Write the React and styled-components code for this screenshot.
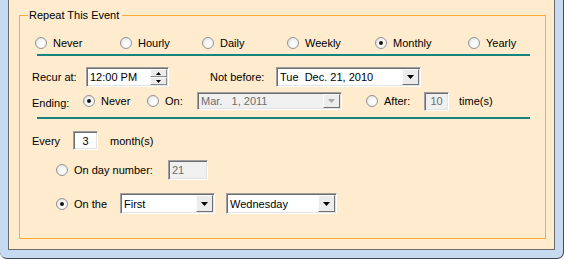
import styled, { createGlobalStyle, css } from "styled-components";

const GlobalStyle = createGlobalStyle`
  html, body {
    margin: 0;
    padding: 0;
    background: #ffffff;
  }
  body {
    font-family: "Liberation Sans", Arial, sans-serif;
    font-size: 11px;
    color: #000;
  }
`;

const Window = styled.div`
  box-sizing: border-box;
  width: 564px;
  height: 259px;
  display: flex;
  padding: 0 8px 8px 8px;
  background: #c6daf2;
  border-right: 1px solid #3e4856;
  border-bottom: 1px solid #3e4856;
  border-radius: 0 0 7px 7px;
`;

const Panel = styled.div`
  box-sizing: border-box;
  width: 547px;
  height: 250px;
  display: flex;
  padding: 9px 8px 10px 10px;
  background: #ffebcd;
  border: 1px solid #6b6b6b;
  border-top: none;
`;

const GroupBox = styled.fieldset`
  box-sizing: border-box;
  flex: 1;
  min-width: 0;
  margin: 0;
  padding: 0;
  border: 1px solid #fbab38;
`;

const Legend = styled.legend`
  margin-left: 8px;
  padding: 0 3px 0 1px;
  line-height: 13px;
  font-size: 11px;
`;

const Body = styled.div`
  display: flex;
  flex-direction: column;
`;

const Row = styled.div`
  display: flex;
  align-items: center;
  height: ${(p) => p.$h}px;
  margin-top: ${(p) => p.$top}px;
  padding-left: ${(p) => p.$left}px;
  white-space: nowrap;
`;

const Divider = styled.div`
  height: 2px;
  margin: ${(p) => p.$top}px 15px 0 17px;
  background: #16837e;
`;

const Label = styled.span`
  flex: none;
  width: ${(p) => (p.$w ? `${p.$w}px` : "auto")};
  margin-left: ${(p) => p.$ml || 0}px;
  position: relative;
  top: ${(p) => p.$dy || 0}px;
`;

const Option = styled.label`
  flex: none;
  display: flex;
  align-items: center;
  gap: 6px;
  width: ${(p) => (p.$w ? `${p.$w}px` : "auto")};
  margin-left: ${(p) => p.$ml || 0}px;
`;

const RadioDot = styled.span`
  box-sizing: border-box;
  position: relative;
  flex: none;
  width: 12px;
  height: 12px;
  border-radius: 50%;
  border: 1px solid #939393;
  background: radial-gradient(
    circle at 62% 62%,
    #ffffff 0%,
    #f6f6f6 45%,
    #d6d6d6 100%
  );

  &::after {
    content: "";
    display: ${(p) => (p.$on ? "block" : "none")};
    position: absolute;
    left: 3px;
    top: 3px;
    width: 4px;
    height: 4px;
    border-radius: 50%;
    background: #151515;
  }
`;

const sunken = css`
  box-sizing: border-box;
  border-style: solid;
  border-width: 1px;
  border-color: #a0a0a0 #ffffff #ffffff #a0a0a0;
  box-shadow: inset 1px 1px 0 #6e6e6e, inset -1px -1px 0 #e3e3e3;
`;

const TextBox = styled.div`
  ${sunken}
  flex: none;
  display: flex;
  align-items: center;
  justify-content: ${(p) => (p.$center ? "center" : "flex-start")};
  width: ${(p) => p.$w}px;
  height: ${(p) => p.$h}px;
  margin-left: ${(p) => p.$ml || 0}px;
  padding: 0 3px;
  background: ${(p) => (p.$disabled ? "#f0f0f0" : "#ffffff")};
  color: ${(p) => (p.$disabled ? "#6d6d6d" : "#000000")};
`;

const FieldText = styled.span`
  flex: 1;
  white-space: pre;
  overflow: hidden;
`;

const DropButton = styled.span`
  box-sizing: border-box;
  flex: none;
  display: flex;
  align-items: center;
  justify-content: center;
  width: 17px;
  height: ${(p) => p.$h}px;
  margin-right: -2px;
  background: #ececec;
  border: 1px solid;
  border-color: #fbfbfb #707070 #707070 #fbfbfb;
`;

const SpinColumn = styled.span`
  flex: none;
  display: flex;
  flex-direction: column;
  width: 17px;
  height: 16px;
  margin-right: -2px;
`;

const SpinButton = styled.span`
  box-sizing: border-box;
  flex: 1;
  display: flex;
  align-items: center;
  justify-content: center;
  background: #ececec;
  border: 1px solid;
  border-color: #fbfbfb #8a8a8a #8a8a8a #fbfbfb;
`;

function Arrow({ up, size = 7, color = "#000" }) {
  const h = Math.ceil(size / 2);
  return (
    <svg width={size} height={h} viewBox={`0 0 ${size} ${h}`}>
      <polygon
        points={up ? `0,${h} ${size / 2},0 ${size},${h}` : `0,0 ${size},0 ${size / 2},${h}`}
        fill={color}
      />
    </svg>
  );
}

function Radio({ on, w, ml, children }) {
  return (
    <Option $w={w} $ml={ml}>
      <RadioDot $on={on} />
      <span>{children}</span>
    </Option>
  );
}

function Combo({ w, h, ml, disabled, children }) {
  return (
    <TextBox $w={w} $h={h} $ml={ml} $disabled={disabled}>
      <FieldText>{children}</FieldText>
      <DropButton $h={h - 4}>
        <Arrow color={disabled ? "#a6a6a6" : "#000"} />
      </DropButton>
    </TextBox>
  );
}

const frequencies = [
  { label: "Never", w: 85 },
  { label: "Hourly", w: 82 },
  { label: "Daily", w: 85 },
  { label: "Weekly", w: 88 },
  { label: "Monthly", w: 93, on: true },
  { label: "Yearly" },
];

export default function App() {
  return (
    <>
      <GlobalStyle />
      <Window>
        <Panel>
          <GroupBox>
            <Legend>Repeat This Event</Legend>
            <Body>
              <Row $top={13} $h={15} $left={15}>
                {frequencies.map((f) => (
                  <Radio key={f.label} w={f.w} on={f.on}>
                    {f.label}
                  </Radio>
                ))}
              </Row>
              <Divider $top={4} />

              <Row $top={11} $h={20} $left={12}>
                <Label $w={54}>Recur at:</Label>
                <TextBox $w={83} $h={20}>
                  <FieldText>12:00 PM</FieldText>
                  <SpinColumn>
                    <SpinButton>
                      <Arrow up size={5} />
                    </SpinButton>
                    <SpinButton>
                      <Arrow size={5} />
                    </SpinButton>
                  </SpinColumn>
                </TextBox>
                <Label $w={66} $ml={41}>
                  Not before:
                </Label>
                <Combo w={145} h={20}>
                  {"Tue  Dec. 21, 2010"}
                </Combo>
              </Row>

              <Row $top={4} $h={20} $left={12}>
                <Label $w={51} $dy={2}>
                  Ending:
                </Label>
                <Radio w={64} on>
                  Never
                </Radio>
                <Radio w={50}>On:</Radio>
                <Combo w={145} h={18} disabled>
                  {"Mar.   1, 2011"}
                </Combo>
                <Radio w={58} ml={24}>
                  After:
                </Radio>
                <TextBox $w={25} $h={19} $center $disabled>
                  10
                </TextBox>
                <Label $ml={10}>time(s)</Label>
              </Row>
              <Divider $top={6} />

              <Row $top={12} $h={19} $left={12}>
                <Label $w={41}>Every</Label>
                <TextBox $w={25} $h={19} $center>
                  3
                </TextBox>
                <Label $ml={12}>month(s)</Label>
              </Row>

              <Row $top={10} $h={20} $left={36}>
                <Radio w={112}>On day number:</Radio>
                <TextBox $w={40} $h={20} $disabled>
                  21
                </TextBox>
              </Row>

              <Row $top={13} $h={21} $left={36}>
                <Radio w={64} on>
                  On the
                </Radio>
                <Combo w={95} h={21}>
                  First
                </Combo>
                <Combo w={111} h={21} ml={11}>
                  Wednesday
                </Combo>
              </Row>
            </Body>
          </GroupBox>
        </Panel>
      </Window>
    </>
  );
}
